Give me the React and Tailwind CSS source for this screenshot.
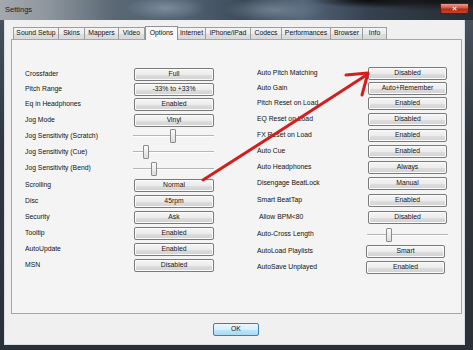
import React from "react";

const tabs = [
  { label: "Sound Setup", w: "w-[46px]" },
  { label: "Skins", w: "w-[26px]" },
  { label: "Mappers", w: "w-[34px]" },
  { label: "Video", w: "w-[26px]" },
  { label: "Options", w: "w-[33px]", active: true },
  { label: "Internet", w: "w-[28px]" },
  { label: "iPhone/iPad", w: "w-[45px]" },
  { label: "Codecs", w: "w-[31px]" },
  { label: "Performances", w: "w-[49px]" },
  { label: "Browser", w: "w-[32px]" },
  { label: "Info", w: "w-[24px]" },
];

const leftRows = [
  { label: "Crossfader", btn: "Full", h: "h-[16px]" },
  { label: "Pitch Range", btn: "-33% to +33%", h: "h-[15px]" },
  { label: "Eq in Headphones", btn: "Enabled", h: "h-[15px]" },
  { label: "Jog Mode", btn: "Vinyl", h: "h-[16px]" },
  { label: "Jog Sensitivity (Scratch)", slider: 37, h: "h-[16px]" },
  { label: "Jog Sensitivity (Cue)", slider: 10, h: "h-[16px]" },
  { label: "Jog Sensitivity (Bend)", slider: 18, h: "h-[17px]" },
  { label: "Scrolling", btn: "Normal", h: "h-[16px]" },
  { label: "Disc", btn: "45rpm", h: "h-[16px]" },
  { label: "Security", btn: "Ask", h: "h-[16px]" },
  { label: "Tooltip", btn: "Enabled", h: "h-[16px]" },
  { label: "AutoUpdate", btn: "Enabled", h: "h-[16px]" },
  { label: "MSN", btn: "Disabled", h: "h-[16px]" },
];

const rightRows = [
  { label: "Auto Pitch Matching", btn: "Disabled", h: "h-[15px]" },
  { label: "Auto Gain", btn: "Auto+Remember", h: "h-[15px]" },
  { label: "Pitch Reset on Load", btn: "Enabled", h: "h-[15px]" },
  { label: "EQ Reset on Load", btn: "Disabled", h: "h-[16px]" },
  { label: "FX Reset on Load", btn: "Enabled", h: "h-[16px]" },
  { label: "Auto Cue", btn: "Enabled", h: "h-[16px]" },
  { label: "Auto Headphones", btn: "Always", h: "h-[16px]" },
  { label: "Disengage BeatLock", btn: "Manual", h: "h-[17px]" },
  { label: "Smart BeatTap", btn: "Enabled", h: "h-[17px]" },
  { label: "Allow BPM<80", btn: "Disabled", h: "h-[17px]", indent: true },
  { label: "Auto-Cross Length", slider: 19, h: "h-[17px]" },
  { label: "AutoLoad Playlists", btn: "Smart", h: "h-[16px]", shift: true },
  { label: "AutoSave Unplayed", btn: "Enabled", h: "h-[16px]", shift: true },
];

function WinButton({ children, w }) {
  return (
    <div
      className={`${w} h-[13px] flex items-center justify-center rounded-[2px] border border-[#7a7a7a] bg-[linear-gradient(to_bottom,#f6f6f6_0%,#ececec_50%,#dedede_51%,#d2d2d2_100%)] text-[#151515] shadow-[inset_0_0_0_1px_#fbfbfb]`}
    >
      {children}
    </div>
  );
}

function Slider({ pos, w }) {
  return (
    <div className={`${w} relative h-[14px] flex items-center`}>
      <div className="w-full h-[2px] border-t border-[#b5b5b5] bg-white" />
      <div
        className="absolute top-0 w-[6px] h-[14px] rounded-[1px] border border-[#8c8c8c] bg-[linear-gradient(to_bottom,#fafafa,#dcdcdc)]"
        style={{ left: pos }}
      />
    </div>
  );
}

function Column({ rows, labelW, btnW }) {
  return (
    <div className="flex flex-col">
      {rows.map((r) => (
        <div key={r.label} className={`${r.h} flex items-center`}>
          <div className={`${labelW} ${r.indent ? "pl-[2px]" : ""} whitespace-nowrap`}>{r.label}</div>
          {r.slider !== undefined ? (
            <div className="-ml-[1px]">
              <Slider pos={r.slider} w="w-[81px]" />
            </div>
          ) : (
            <div className={r.shift ? "-ml-[2px]" : ""}>
              <WinButton w={btnW}>{r.btn}</WinButton>
            </div>
          )}
        </div>
      ))}
    </div>
  );
}

export default function App() {
  return (
    <div className="relative w-[473px] h-[350px] overflow-hidden bg-[linear-gradient(to_bottom,#4b5560_0%,#30373f_40%,#2a3038_100%)] font-['Liberation_Sans',Arial,sans-serif] text-[6.8px] text-[#111] leading-none">
      {/* title bar */}
      <div className="relative h-[20px] flex items-center bg-[radial-gradient(ellipse_60px_8px_at_78%_0%,#0c0c0c_0%,transparent_100%),radial-gradient(ellipse_90px_10px_at_92%_5%,#141414_0%,transparent_100%),radial-gradient(ellipse_40px_12px_at_35%_40%,#7c8c9c_0%,transparent_100%),radial-gradient(ellipse_50px_12px_at_58%_50%,#6e7e8e_0%,transparent_100%),linear-gradient(90deg,#a3a8ad_0%,#8e969e_10%,#5a6874_24%,#4f5f6f_40%,#3c4a58_52%,#55657a_64%,#35414e_78%,#252c34_100%)]">
        <span className="ml-[5px] text-[7.5px] text-[#1c1c1c]">Settings</span>
        <div className="absolute right-[4px] top-[3px] w-[29px] h-[11px] rounded-b-[3px] border border-[#5a1a12] bg-[linear-gradient(to_bottom,#e6a090_0%,#d0553f_45%,#b52a16_55%,#c8442c_100%)] flex items-center justify-center">
          <span className="text-white text-[8px] font-bold leading-none">×</span>
        </div>
      </div>

      {/* client */}
      <div className="ml-[4px] mr-[8px] h-[325px] bg-[#f0f0f0] border-l border-r border-b border-[#d9dde2] flex flex-col">
        {/* tabs */}
        <div className="pt-[5px] ml-[8px] h-[19px] flex items-end">
          {tabs.map((t) =>
            t.active ? (
              <div
                key={t.label}
                className={`${t.w} h-[14px] -mb-[1px] relative z-10 flex items-center justify-center border border-b-0 border-[#8e9196] bg-[#f7f7f7] text-[#111]`}
              >
                <span className="-mt-[1px]">{t.label}</span>
              </div>
            ) : (
              <div
                key={t.label}
                className={`${t.w} h-[12px] flex items-center justify-center border border-l-0 first:border-l border-b-0 border-[#9a9da2] bg-[linear-gradient(to_bottom,#f3f3f3_0%,#ebebeb_50%,#dedede_51%,#d9d9d9_100%)]`}
              >
                {t.label}
              </div>
            )
          )}
        </div>

        {/* panel */}
        <div className="ml-[6px] w-[451px] h-[275px] border border-[#a3a6ab] bg-[#f4f4f4] flex pt-[26px] pl-[13px]">
          <Column rows={leftRows} labelW="w-[109px]" btnW="w-[80px]" />
          <div className="ml-[43px]">
            <Column rows={rightRows} labelW="w-[111px]" btnW="w-[79px]" />
          </div>
        </div>

        {/* OK */}
        <div className="mt-[9px] flex justify-center pl-[3px]">
          <div className="w-[46px] h-[13px] rounded-[2px] border border-[#3c7fb1] bg-[linear-gradient(to_bottom,#eaf6fd_0%,#d9f0fc_50%,#bee6fd_51%,#a7d9f5_100%)] flex items-center justify-center text-[#111]">
            OK
          </div>
        </div>
      </div>

      {/* red arrow annotation */}
      <svg className="absolute inset-0 pointer-events-none" width="473" height="350" viewBox="0 0 473 350">
        <path d="M203 180 Q 285 128 368 74" stroke="#d41d1d" strokeWidth="3" fill="none" strokeLinecap="round" />
        <path d="M346 75 L368 73 L362 95" stroke="#d41d1d" strokeWidth="3" fill="none" strokeLinecap="round" strokeLinejoin="round" />
      </svg>
    </div>
  );
}
